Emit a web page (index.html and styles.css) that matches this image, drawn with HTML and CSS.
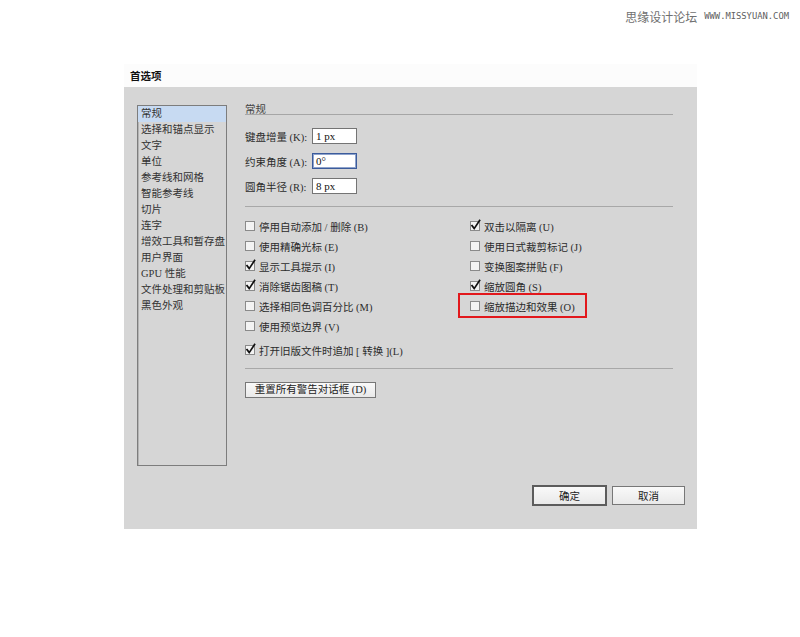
FILE: index.html
```html
<!DOCTYPE html>
<html lang="zh-CN">
<head>
<meta charset="utf-8">
<title>首选项</title>
<link rel="stylesheet" href="styles.css">
</head>
<body>
<div class="watermark"><span class="wm-cn">思缘设计论坛</span><span class="wm-en">WWW.MISSYUAN.COM</span></div>
<div class="dialog">
  <div class="titlebar">首选项</div>
  <div class="body">
    <ul class="nav">
      <li class="active">常规</li>
      <li>选择和锚点显示</li>
      <li>文字</li>
      <li>单位</li>
      <li>参考线和网格</li>
      <li>智能参考线</li>
      <li>切片</li>
      <li>连字</li>
      <li>增效工具和暂存盘</li>
      <li>用户界面</li>
      <li>GPU 性能</li>
      <li>文件处理和剪贴板</li>
      <li>黑色外观</li>
    </ul>
    <div class="main">
      <div class="section-title">常规</div>
      <div class="fields">
        <div class="field"><span class="field-label">键盘增量 (K):</span><div class="input">1 px</div></div>
        <div class="field"><span class="field-label">约束角度 (A):</span><div class="input focus">0°</div></div>
        <div class="field"><span class="field-label">圆角半径 (R):</span><div class="input">8 px</div></div>
      </div>
      <div class="sep"></div>
      <div class="checks">
        <div class="col">
          <div class="check"><svg class="box" width="10" height="10" viewBox="0 0 10 10"><rect x="0.5" y="0.5" width="9" height="9"/></svg><span>停用自动添加 / 删除 (B)</span></div>
          <div class="check"><svg class="box" width="10" height="10" viewBox="0 0 10 10"><rect x="0.5" y="0.5" width="9" height="9"/></svg><span>使用精确光标 (E)</span></div>
          <div class="check"><svg class="box" width="10" height="10" viewBox="0 0 10 10"><rect x="0.5" y="0.5" width="9" height="9"/><polyline class="tick" points="2,4.6 4.2,7.6 9.6,-0.6"/></svg><span>显示工具提示 (I)</span></div>
          <div class="check"><svg class="box" width="10" height="10" viewBox="0 0 10 10"><rect x="0.5" y="0.5" width="9" height="9"/><polyline class="tick" points="2,4.6 4.2,7.6 9.6,-0.6"/></svg><span>消除锯齿图稿 (T)</span></div>
          <div class="check"><svg class="box" width="10" height="10" viewBox="0 0 10 10"><rect x="0.5" y="0.5" width="9" height="9"/></svg><span>选择相同色调百分比 (M)</span></div>
          <div class="check"><svg class="box" width="10" height="10" viewBox="0 0 10 10"><rect x="0.5" y="0.5" width="9" height="9"/></svg><span>使用预览边界 (V)</span></div>
        </div>
        <div class="col">
          <div class="check"><svg class="box" width="10" height="10" viewBox="0 0 10 10"><rect x="0.5" y="0.5" width="9" height="9"/><polyline class="tick" points="2,4.6 4.2,7.6 9.6,-0.6"/></svg><span>双击以隔离 (U)</span></div>
          <div class="check"><svg class="box" width="10" height="10" viewBox="0 0 10 10"><rect x="0.5" y="0.5" width="9" height="9"/></svg><span>使用日式裁剪标记 (J)</span></div>
          <div class="check"><svg class="box" width="10" height="10" viewBox="0 0 10 10"><rect x="0.5" y="0.5" width="9" height="9"/></svg><span>变换图案拼贴 (F)</span></div>
          <div class="check"><svg class="box" width="10" height="10" viewBox="0 0 10 10"><rect x="0.5" y="0.5" width="9" height="9"/><polyline class="tick" points="2,4.6 4.2,7.6 9.6,-0.6"/></svg><span>缩放圆角 (S)</span></div>
          <div class="check highlight"><svg class="box" width="10" height="10" viewBox="0 0 10 10"><rect x="0.5" y="0.5" width="9" height="9"/></svg><span>缩放描边和效果 (O)</span></div>
        </div>
      </div>
      <div class="check single"><svg class="box" width="10" height="10" viewBox="0 0 10 10"><rect x="0.5" y="0.5" width="9" height="9"/><polyline class="tick" points="2,4.6 4.2,7.6 9.6,-0.6"/></svg><span>打开旧版文件时追加 [ 转换 ](L)</span></div>
      <div class="sep sep2"></div>
      <button class="btn reset" type="button">重置所有警告对话框 (D)</button>
    </div>
    <div class="footer">
      <button class="btn ok" type="button">确定</button>
      <button class="btn cancel" type="button">取消</button>
    </div>
  </div>
</div>
</body>
</html>
```
FILE: styles.css
```css
html, body {
  margin: 0;
  padding: 0;
  background: #ffffff;
}

.watermark {
  height: 32px;
  display: flex;
  justify-content: flex-end;
  align-items: center;
  gap: 7px;
  padding-right: 11px;
}

.wm-cn {
  font-family: "Noto Sans CJK SC", sans-serif;
  font-size: 12px;
  color: #707070;
}

.wm-en {
  font-family: "DejaVu Sans Mono", monospace;
  font-size: 8.8px;
  color: #606060;
}

.dialog {
  margin: 32px 0 0 124px;
  width: 573px;
  font-family: "Liberation Serif", "Noto Sans CJK SC", serif;
  font-size: 10.5px;
  color: #2b2b2b;
}

.titlebar {
  height: 23px;
  line-height: 23px;
  background: #fcfcfc;
  padding-left: 6px;
  font-family: "Noto Sans CJK SC", sans-serif;
  font-weight: bold;
  font-size: 10.5px;
  color: #111;
}

.body {
  background: #d6d6d6;
  display: grid;
  grid-template-columns: 90px 1fr;
  grid-template-rows: 361px auto;
  column-gap: 18px;
  row-gap: 19px;
  padding: 18px 12px 23px 13px;
}

.nav {
  list-style: none;
  margin: 0;
  padding: 0;
  border: 1px solid #7d7d7d;
  box-sizing: border-box;
  box-shadow: inset 1px 1px 0 #b4b4b4;
}

.nav li {
  height: 16px;
  line-height: 16px;
  padding-left: 3px;
  white-space: nowrap;
  color: #333;
}

.nav li.active {
  background: #c7daf2;
}

.main {
  width: 428px;
}

.section-title {
  height: 9px;
  line-height: 9px;
  border-bottom: 1px solid #a6a6a6;
  color: #444;
}

.fields {
  margin-top: 13px;
  display: flex;
  flex-direction: column;
  gap: 9px;
}

.field {
  display: flex;
  align-items: center;
  height: 16px;
}

.field-label {
  width: 67px;
  white-space: nowrap;
}

.input {
  width: 45px;
  height: 16px;
  box-sizing: border-box;
  border: 1px solid #747474;
  background: #fff;
  padding-left: 3px;
  line-height: 14px;
  font-size: 11px;
  color: #111;
}

.input.focus {
  border-color: #3b5b9b;
  box-shadow: inset 0 0 0 1px #8ea3cc;
}

.sep {
  height: 1px;
  background: #a8a8a8;
  margin-top: 12px;
}

.sep2 {
  margin-top: 8px;
}

.checks {
  display: grid;
  grid-template-columns: 225px 1fr;
  margin-top: 9px;
}

.col {
  display: flex;
  flex-direction: column;
}

.check {
  display: flex;
  align-items: center;
  gap: 4px;
  height: 20px;
  position: relative;
  white-space: nowrap;
}

.check.single {
  margin-top: 4px;
}

.box {
  flex: none;
  overflow: visible;
}

.box rect {
  fill: #f3f3f3;
  stroke: #8a8a8a;
  stroke-width: 1;
}

.box .tick {
  fill: none;
  stroke: #111;
  stroke-width: 1.7;
  stroke-linecap: square;
}

.highlight::after {
  content: "";
  position: absolute;
  left: -12px;
  top: -3px;
  width: 129px;
  height: 25px;
  border: 2px solid #e2181c;
  box-sizing: border-box;
}

.btn {
  font: inherit;
  color: #222;
  background: linear-gradient(#f9f9f9, #e9e9e9);
  border: 1px solid #777;
  padding: 0;
  margin: 0;
  box-sizing: border-box;
  text-align: center;
}

.reset {
  display: block;
  margin-top: 13px;
  width: 131px;
  height: 16px;
  line-height: 14px;
}

.footer {
  grid-column: 1 / -1;
  display: flex;
  justify-content: flex-end;
  align-items: center;
  gap: 5px;
  height: 21px;
}

.ok {
  width: 75px;
  height: 21px;
  border: 2px solid #5c5c5c;
}

.cancel {
  width: 73px;
  height: 19px;
}
```
